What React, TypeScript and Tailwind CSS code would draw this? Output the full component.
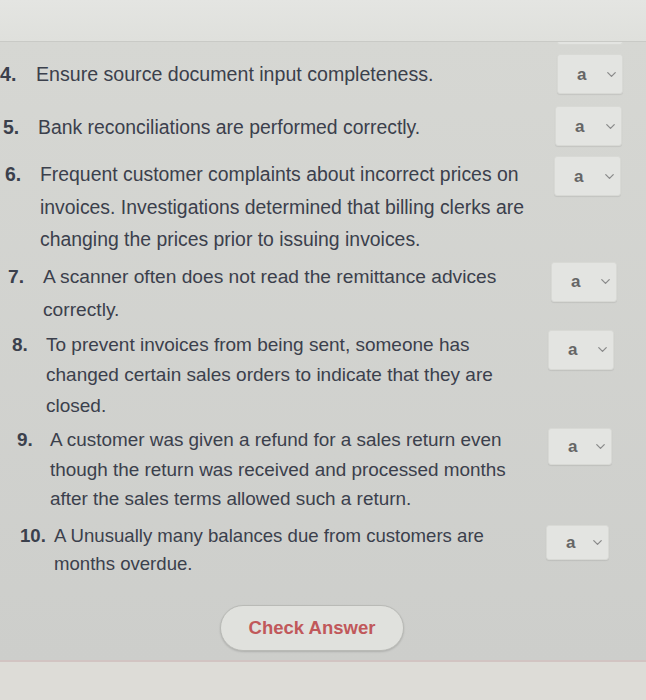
import { ChevronDown } from 'lucide-react'

type Row = {
  num: string
  lines: string[]
  mt: string
  pl: string
  numW: string
  textPt: string
  boxMt: string
  boxW: string
  boxH: string
  pr: string
  leading: string
  size: string
}

const rows: Row[] = [
  { num: '4.', lines: ['Ensure source document input completeness.'], mt: 'mt-[9px]', pl: 'pl-[0px]', numW: 'w-[36px]', textPt: 'pt-[4px]', boxMt: 'mt-[0px]', boxW: 'w-[66px]', boxH: 'h-[40px]', pr: 'pr-[23px]', leading: 'leading-[32px]', size: 'text-[19.6px]' },
  { num: '5.', lines: ['Bank reconciliations are performed correctly.'], mt: 'mt-[12px]', pl: 'pl-[3px]', numW: 'w-[35px]', textPt: 'pt-[5px]', boxMt: 'mt-[0px]', boxW: 'w-[67px]', boxH: 'h-[40px]', pr: 'pr-[24px]', leading: 'leading-[32px]', size: 'text-[19.4px]' },
  { num: '6.', lines: ['Frequent customer complaints about incorrect prices on', 'invoices. Investigations determined that billing clerks are', 'changing the prices prior to issuing invoices.'], mt: 'mt-[10px]', pl: 'pl-[5px]', numW: 'w-[35px]', textPt: 'pt-[2px]', boxMt: 'mt-[0px]', boxW: 'w-[67px]', boxH: 'h-[40px]', pr: 'pr-[25px]', leading: 'leading-[32.5px]', size: 'text-[19.4px]' },
  { num: '7.', lines: ['A scanner often does not read the remittance advices', 'correctly.'], mt: 'mt-[4px]', pl: 'pl-[8px]', numW: 'w-[35px]', textPt: 'pt-[0px]', boxMt: 'mt-[2px]', boxW: 'w-[66px]', boxH: 'h-[40px]', pr: 'pr-[29px]', leading: 'leading-[33px]', size: 'text-[19.2px]' },
  { num: '8.', lines: ['To prevent invoices from being sent, someone has', 'changed certain sales orders to indicate that they are', 'closed.'], mt: 'mt-[4px]', pl: 'pl-[12px]', numW: 'w-[34px]', textPt: 'pt-[0px]', boxMt: 'mt-[0px]', boxW: 'w-[66px]', boxH: 'h-[40px]', pr: 'pr-[32px]', leading: 'leading-[30.5px]', size: 'text-[19px]' },
  { num: '9.', lines: ['A customer was given a refund for a sales return even', 'though the return was received and processed months', 'after the sales terms allowed such a return.'], mt: 'mt-[4px]', pl: 'pl-[17px]', numW: 'w-[33px]', textPt: 'pt-[0px]', boxMt: 'mt-[3px]', boxW: 'w-[64px]', boxH: 'h-[37px]', pr: 'pr-[34px]', leading: 'leading-[29.5px]', size: 'text-[18.9px]' },
  { num: '10.', lines: ['A Unusually many balances due from customers are', 'months overdue.'], mt: 'mt-[8px]', pl: 'pl-[20px]', numW: 'w-[34px]', textPt: 'pt-[0px]', boxMt: 'mt-[3px]', boxW: 'w-[63px]', boxH: 'h-[35px]', pr: 'pr-[37px]', leading: 'leading-[28px]', size: 'text-[18.6px]' },
]

function AnswerSelect({ w, h, mt }: { w: string; h: string; mt: string }) {
  return (
    <div
      className={`${w} ${h} ${mt} shrink-0 rounded-[3px] bg-[#e3e4e1] border border-[#d8d9d5] shadow-[0_1px_1px_rgba(0,0,0,0.08)] flex items-center justify-between pl-[19px] pr-[3px]`}
    >
      <span className="text-[17px] font-bold text-[#666] leading-none">a</span>
      <ChevronDown size={15} strokeWidth={2} className="text-[#8a8a8a]" />
    </div>
  )
}

export default function App() {
  return (
    <div className="w-[646px] h-[700px] flex flex-col bg-[#dcdcd8] overflow-hidden" style={{ fontFamily: '"Liberation Sans", Arial, sans-serif' }}>
      <div className="h-[42px] shrink-0 bg-gradient-to-b from-[#e4e5e2] to-[#dfe0dc] border-b border-[#c9cac6]" />

      <div className="h-[620px] shrink-0 bg-gradient-to-b from-[#d6d7d3] to-[#cdcecb] border-b-2 border-[#d2c4c2] flex flex-col">
        <div className="flex justify-end pr-[23px]">
          <div className="w-[66px] h-[3px] rounded-b-[3px] bg-[#e3e4e1] border-x border-b border-[#d8d9d5]" />
        </div>

        {rows.map((r) => (
          <div key={r.num} className={`flex items-start justify-between ${r.mt} ${r.pl} ${r.pr}`}>
            <div className={`flex ${r.textPt} ${r.leading} ${r.size} text-[#3b404c]`}>
              <span className={`${r.numW} shrink-0 font-bold`}>{r.num}</span>
              <div className="flex flex-col">
                {r.lines.map((l) => (
                  <span key={l}>{l}</span>
                ))}
              </div>
            </div>
            <AnswerSelect w={r.boxW} h={r.boxH} mt={r.boxMt} />
          </div>
        ))}

        <div className="mt-[27px] pl-[220px]">
          <button className="w-[184px] h-[46px] rounded-full bg-[#e0e1dd] border border-[#b9bab6] shadow-[0_1px_2px_rgba(0,0,0,0.15)] text-[18.5px] font-bold text-[#c0585a]">
            Check Answer
          </button>
        </div>
      </div>

      <div className="flex-1 bg-[#dddcd7]" />
    </div>
  )
}
